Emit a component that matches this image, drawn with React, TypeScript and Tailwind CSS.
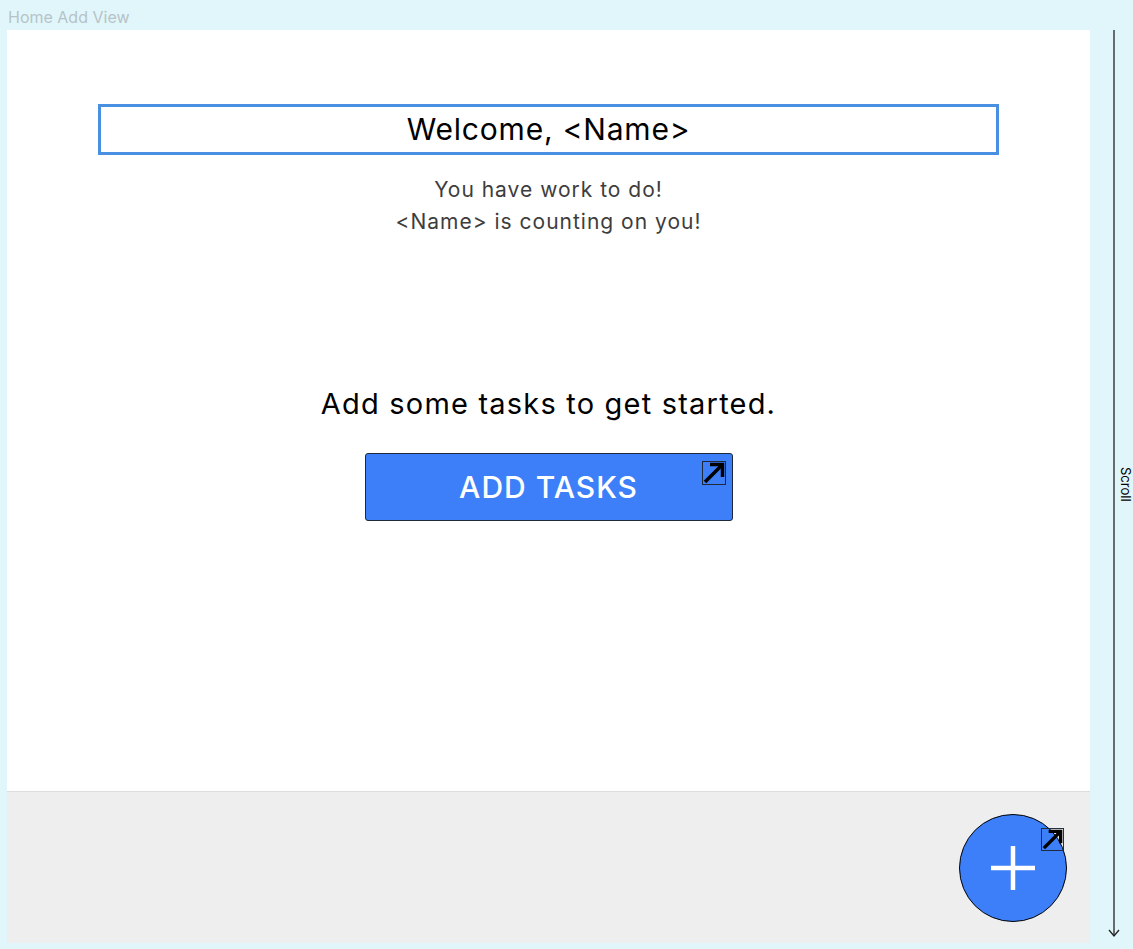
import React from 'react';

function LinkIcon({ className }: { className?: string }) {
  return (
    <svg viewBox="0 0 24 24" className={className} fill="none">
      <rect x="0.5" y="0.5" width="23" height="23" stroke="#1f2937" strokeWidth="1" />
      <path d="M3 21 L19 5" stroke="black" strokeWidth="3.5" />
      <path d="M8 3.5 H20.5 V16" stroke="black" strokeWidth="3.5" />
    </svg>
  );
}

export default function App() {
  const font = { fontFamily: '"Inter", "Open Sans", sans-serif' };
  return (
    <div className="w-[1133px] h-[949px] bg-[#e1f6fa] flex flex-col" style={font}>
      <div className="h-[30px] pl-2 pt-[6px] text-[16px] leading-[22px] text-[#b6c3c8]">Home Add View</div>
      <div className="flex flex-1 min-h-0">
        <div className="ml-[7px] w-[1083px] flex flex-col mb-[6px]">
          <div className="flex-1 bg-white flex flex-col items-center">
            <div className="mt-[74px] w-[901px] h-[51px] border-[3px] border-[#4a90e2] flex items-center justify-center text-[30px] tracking-[0.8px] text-black">
              Welcome, &lt;Name&gt;
            </div>
            <div className="mt-[19px] text-[21px] leading-[32px] tracking-[1px] text-[#3d3d3d] text-center">
              <div>You have work to do!</div>
              <div>&lt;Name&gt; is counting on you!</div>
            </div>
            <div className="mt-[148px] text-[29px] leading-[36px] tracking-[1.2px] text-black">Add some tasks to get started.</div>
            <button className="relative mt-[31px] w-[368px] h-[68px] bg-[#3d7ff9] border border-[#1e293b] rounded-[3px] text-white text-[30px] tracking-[1px] font-medium flex items-center justify-center">
              ADD TASKS
              <LinkIcon className="absolute top-[7px] right-[6px] w-[24px] h-[24px]" />
            </button>
          </div>
          <div className="h-[152px] bg-[#eeeeee] border-t border-[#dddddd] flex justify-end items-center pr-[23px]">
            <div className="relative w-[108px] h-[108px] rounded-full bg-[#3d7ff9] border border-black flex items-center justify-center">
              <svg viewBox="0 0 48 48" className="w-[48px] h-[48px]">
                <path d="M24 2 V46 M2 24 H46" stroke="white" strokeWidth="4.5" />
              </svg>
              <LinkIcon className="absolute top-[13px] right-[2px] w-[23px] h-[23px]" />
            </div>
          </div>
        </div>
        <div className="relative w-[43px]">
          <svg className="absolute left-[17px] top-0 w-[14px] h-[908px]" viewBox="0 0 14 908">
            <path d="M7 0 V906" stroke="#222" strokeWidth="1.3" />
            <path d="M2 900 L7 906 L12 900" stroke="#222" strokeWidth="1.3" fill="none" />
          </svg>
          <div className="absolute left-[43px] top-[437px] rotate-90 origin-top-left text-[13px] leading-[14px] text-black whitespace-nowrap">
            Scroll
          </div>
        </div>
      </div>
    </div>
  );
}
